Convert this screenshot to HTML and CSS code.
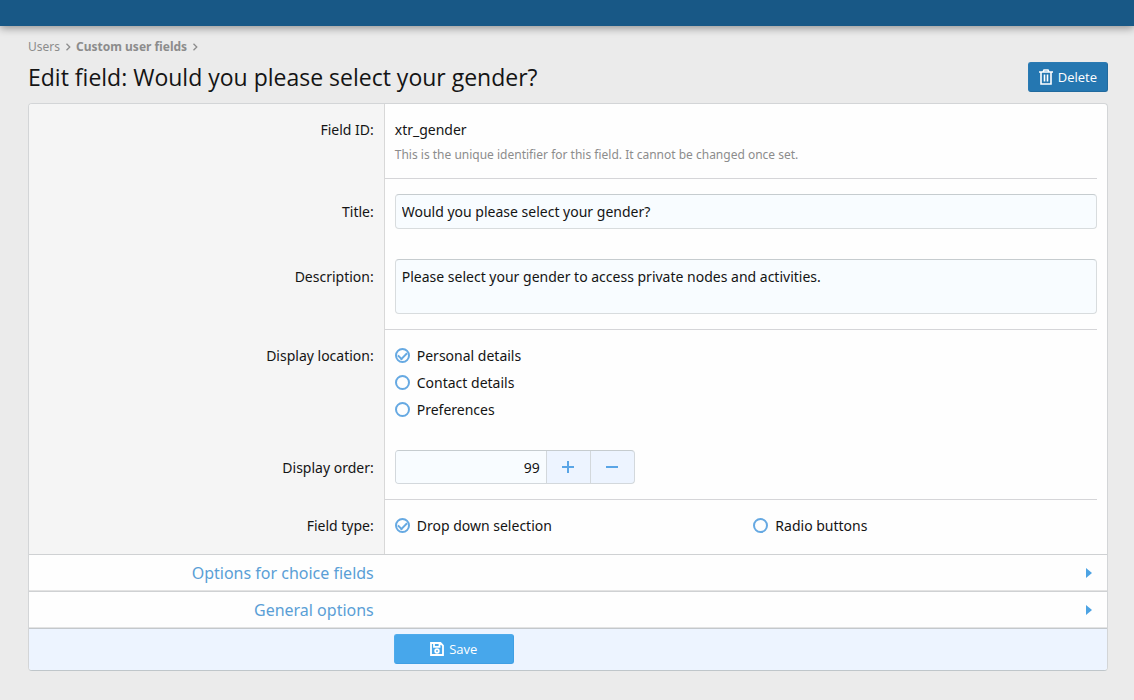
FILE: index.html
```html
<!DOCTYPE html>
<html lang="en">
<head>
<meta charset="utf-8">
<meta name="viewport" content="width=device-width, initial-scale=1">
<title>Edit field</title>
<link rel="stylesheet" href="styles.css">
</head>
<body>
<header class="topbar"></header>
<main class="page">
  <nav class="crumbs" aria-label="Breadcrumb">
    <a href="#">Users</a>
    <svg class="chevron" viewBox="0 0 6 8"><path d="M1.5 .7 4.8 4 1.5 7.3"/></svg>
    <a href="#" class="crumb-current">Custom user fields</a>
    <svg class="chevron" viewBox="0 0 6 8"><path d="M1.5 .7 4.8 4 1.5 7.3"/></svg>
  </nav>
  <div class="title-bar">
    <h1 class="title">Edit field: Would you please select your gender?</h1>
    <button type="button" class="button button-delete">
      <svg class="icon icon-trash" viewBox="0 0 14 16"><path d="M0 3h14M4 3l1-2h4l1 2M2 3v12h10V3M5.500 5.500v7M8.500 5.500v7"/></svg>
      Delete
    </button>
  </div>

  <form class="panel">
    <div class="row row-divided">
      <div class="label">Field ID:</div>
      <div class="value">
        <div>xtr_gender</div>
        <div class="hint">This is the unique identifier for this field. It cannot be changed once set.</div>
      </div>
    </div>
    <div class="row row-input">
      <label class="label" for="title">Title:</label>
      <div class="value"><input class="input" id="title" type="text" value="Would you please select your gender?"></div>
    </div>
    <div class="row row-input row-divided">
      <label class="label" for="description">Description:</label>
      <div class="value"><textarea class="input textarea" id="description">Please select your gender to access private nodes and activities.</textarea></div>
    </div>
    <div class="row" role="radiogroup" aria-labelledby="location-label">
      <div class="label" id="location-label">Display location:</div>
      <div class="value choices">
        <label class="choice"><input class="radio" type="radio" name="location" checked>Personal details</label>
        <label class="choice"><input class="radio" type="radio" name="location">Contact details</label>
        <label class="choice"><input class="radio" type="radio" name="location">Preferences</label>
      </div>
    </div>
    <div class="row row-input row-divided">
      <label class="label" for="order">Display order:</label>
      <div class="value">
        <div class="stepper">
          <input class="stepper-input" id="order" type="text" inputmode="numeric" value="99">
          <button type="button" class="step" aria-label="Increase"><svg class="sign" viewBox="0 0 12 12"><path d="M6 0v12M0 6h12"/></svg></button>
          <button type="button" class="step" aria-label="Decrease"><svg class="sign" viewBox="0 0 12 12"><path d="M0 6h12"/></svg></button>
        </div>
      </div>
    </div>
    <div class="row row-last" role="radiogroup" aria-labelledby="type-label">
      <div class="label" id="type-label">Field type:</div>
      <div class="value choices-columns">
        <label class="choice"><input class="radio" type="radio" name="type" checked>Drop down selection</label>
        <label class="choice"><input class="radio" type="radio" name="type">Radio buttons</label>
      </div>
    </div>
    <button type="button" class="section" aria-expanded="false">
      <span class="section-name">Options for choice fields</span>
      <svg class="caret" viewBox="0 0 6 10"><path d="M0 0l6 5-6 5z"/></svg>
    </button>
    <button type="button" class="section" aria-expanded="false">
      <span class="section-name">General options</span>
      <svg class="caret" viewBox="0 0 6 10"><path d="M0 0l6 5-6 5z"/></svg>
    </button>
    <div class="submit">
      <button type="submit" class="button button-save">
        <svg class="icon icon-save" viewBox="0 0 14 14"><path d="M1 1h9.500L13 3.500V13H1zM4 1v3.800h5.500V1"/><circle cx="7" cy="9" r="1.800"/></svg>
        Save
      </button>
    </div>
  </form>
</main>
</body>
</html>
```
FILE: styles.css
```css
* {
  box-sizing: border-box;
}

body {
  margin: 0;
  background: #ebebeb;
  color: #141414;
  font: 14px/21px "Noto Sans", "Open Sans", sans-serif;
}

button, input, textarea {
  font: inherit;
  color: inherit;
  margin: 0;
}

button {
  cursor: pointer;
}

svg {
  flex: none;
  fill: none;
  stroke: currentColor;
}

.topbar {
  height: 26px;
  background: #185886;
  box-shadow: 0 2px 8px rgba(0, 0, 0, 0.4);
}

.page {
  padding: 12px 26px 30px 28px;
}

.crumbs {
  display: flex;
  align-items: center;
  gap: 5px;
  height: 18px;
  font-size: 12px;
  line-height: 18px;
  color: #8c8c8c;
}

.crumbs a {
  color: inherit;
  text-decoration: none;
}

.crumbs .crumb-current {
  font-weight: 700;
}

.chevron {
  width: 6px;
  height: 8px;
  stroke-width: 1.3;
}

.title-bar {
  display: flex;
  align-items: center;
  justify-content: space-between;
  margin: 6px 0 11px;
}

.title {
  margin: 0;
  font-family: "Open Sans", sans-serif;
  font-size: 23px;
  line-height: 30px;
  font-weight: 400;
}

.button {
  display: flex;
  align-items: center;
  justify-content: center;
  height: 30px;
  border: 1px solid;
  border-radius: 3px;
  color: #fff;
  font-family: "Open Sans", sans-serif;
  font-size: 13px;
  line-height: 18px;
}

.button-delete {
  gap: 5px;
  padding: 0 10px;
  background: #2577b1;
  border-color: #2a7ab3 #216a9e #216a9e #2a7ab3;
}

.button-save {
  gap: 5px;
  width: 120px;
  background: #47a7eb;
  border-color: #4eabec #3f9fe4 #3f9fe4 #4eabec;
}

.icon-trash {
  width: 14px;
  height: 16px;
  stroke-width: 1.6;
}

.icon-save {
  width: 14px;
  height: 14px;
  stroke-width: 1.8;
}

.panel {
  border: 1px solid #d3d5d7;
  border-bottom-color: #bfc6ca;
  border-radius: 4px;
  background: #fefefe;
  overflow: hidden;
}

.row {
  display: grid;
  grid-template-columns: 33% 1fr;
}

.label {
  padding: 15px 10px 15px 15px;
  border-right: 1px solid #d8d8d8;
  background: #f5f5f5;
  text-align: right;
}

.row-input .label {
  padding-top: 22px;
}

.value {
  position: relative;
  padding: 15px 10px;
}

.row-divided .value {
  padding-bottom: 16px;
}

.row-divided .value::after {
  content: "";
  position: absolute;
  left: 0;
  right: 10px;
  bottom: 0;
  border-bottom: 1px solid #d5d5d8;
}

.row-last .value {
  padding-bottom: 18px;
}

.hint {
  padding-top: 7px;
  color: #8c8c8c;
  font-size: 12px;
  line-height: 16px;
}

.input {
  display: block;
  width: 100%;
  height: 35px;
  padding: 6px;
  border: 1px solid #d8dcde;
  border-top-color: #c6cccf;
  border-radius: 4px;
  background: #f8fcff;
}

.textarea {
  height: 55px;
  resize: none;
}

.choices {
  display: grid;
  gap: 6px;
}

.choices-columns {
  display: grid;
  grid-template-columns: 1fr 1fr;
  column-gap: 15px;
}

.choice {
  display: flex;
  align-items: center;
  gap: 7px;
}

.radio {
  appearance: none;
  display: grid;
  place-items: center;
  width: 15px;
  height: 15px;
  border: 2px solid #66a9e2;
  border-radius: 50%;
}

.radio:checked::after {
  content: "";
  width: 7px;
  height: 4px;
  margin-bottom: 2px;
  border: solid #66a9e2;
  border-width: 0 0 2px 2px;
  transform: rotate(-45deg);
}

.stepper {
  display: flex;
  width: 240px;
  height: 34px;
  border: 1px solid #d3d8dc;
  border-top-color: #c6cccf;
  border-radius: 4px;
  background: #edf4ff;
  overflow: hidden;
}

.stepper-input {
  flex: 1;
  min-width: 0;
  padding: 0 6px;
  border: 0;
  background: #f8fcff;
  text-align: right;
}

.step {
  display: grid;
  place-items: center;
  width: 44px;
  padding: 0;
  border: 0;
  border-left: 1px solid #d3d8dc;
  background: none;
  color: #5aa5e6;
}

.sign {
  width: 12px;
  height: 12px;
  stroke-width: 2;
}

.section {
  display: flex;
  align-items: center;
  justify-content: space-between;
  width: 100%;
  height: 37px;
  padding: 0 15px 0 0;
  border: 0;
  border-top: 1px solid #cfd1d3;
  border-bottom: 1px solid #e3e3e3;
  background: #fefefe;
  color: #5a9fd6;
  font-size: 16px;
  line-height: 24px;
}

.section-name {
  width: 33%;
  padding-right: 6px;
  text-align: right;
}

.caret {
  width: 6px;
  height: 10px;
  fill: #4da3e3;
  stroke: none;
}

.submit {
  padding: 5px 0 6px calc(33% + 9px);
  border-top: 1px solid #c3c8cc;
  background: #edf4ff;
}
```
